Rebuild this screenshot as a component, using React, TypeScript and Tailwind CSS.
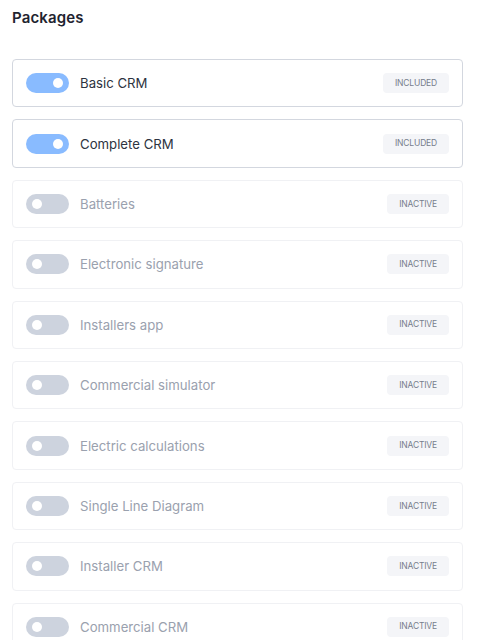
import React from "react";

type Pkg = { name: string; status: "included" | "inactive" };

const packages: Pkg[] = [
  { name: "Basic CRM", status: "included" },
  { name: "Complete CRM", status: "included" },
  { name: "Batteries", status: "inactive" },
  { name: "Electronic signature", status: "inactive" },
  { name: "Installers app", status: "inactive" },
  { name: "Commercial simulator", status: "inactive" },
  { name: "Electric calculations", status: "inactive" },
  { name: "Single Line Diagram", status: "inactive" },
  { name: "Installer CRM", status: "inactive" },
  { name: "Commercial CRM", status: "inactive" },
];

export default function App() {
  return (
    <div
      className="min-h-screen bg-white pt-[8px]"
      style={{ fontFamily: "Inter, 'Noto Sans', sans-serif" }}
    >
      <h2 className="ml-3 text-[15px] leading-5 font-semibold tracking-[0.01em] text-[#1f2430]">
        Packages
      </h2>
      <div className="mt-[31px] ml-3 flex w-[451px] flex-col gap-3">
        {packages.map((p) => (
          <PackageRow key={p.name} pkg={p} />
        ))}
      </div>
    </div>
  );
}

function PackageRow({ pkg }: { pkg: Pkg }) {
  const on = pkg.status === "included";
  return (
    <div
      className={
        on
          ? "flex h-[48.4px] items-center rounded-[4px] border border-[#d3d7df] px-[13px]"
          : "flex h-[48.4px] items-center rounded-[4px] border border-[#f0f1f4] px-[13px]"
      }
    >
      <Toggle on={on} />
      <span
        className={
          on
            ? "ml-[11px] pt-[2px] text-[13.2px] text-[#2d3340]"
            : "ml-[11px] pt-[2px] text-[13.2px] text-[#9aa1ae]"
        }
      >
        {pkg.name}
      </span>
      <span className="ml-auto flex h-5 items-center rounded-[4px] bg-[#f4f5f8] px-3 text-[8.5px] tracking-[-0.02em] text-[#767d8c]">
        {on ? "INCLUDED" : "INACTIVE"}
      </span>
    </div>
  );
}

function Toggle({ on }: { on: boolean }) {
  return (
    <div
      className={
        on
          ? "flex h-5 w-[43px] items-center justify-end rounded-full bg-[#89bbff] px-[6px]"
          : "flex h-5 w-[43px] items-center justify-start rounded-full bg-[#cdd3de] px-[6px]"
      }
    >
      <div className="h-[10px] w-[10px] rounded-full bg-white" />
    </div>
  );
}
